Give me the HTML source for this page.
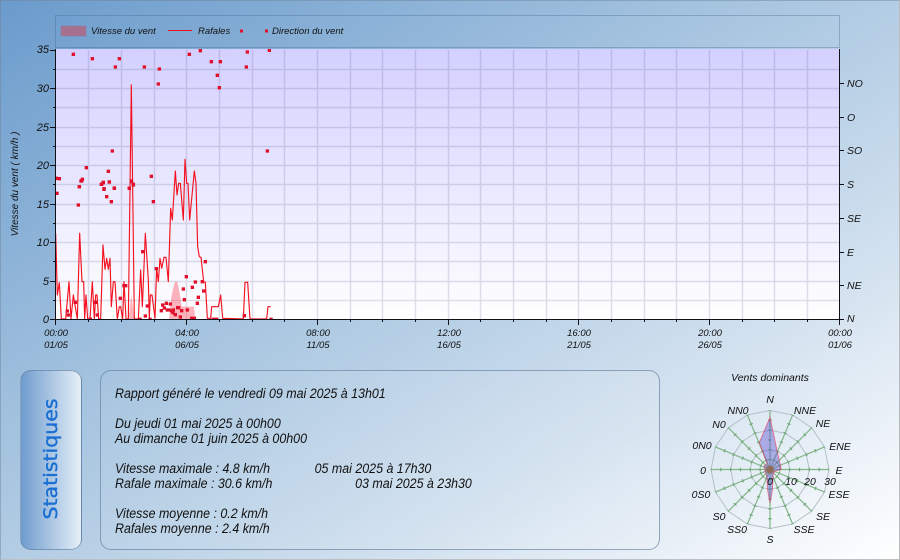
<!DOCTYPE html>
<html><head><meta charset="utf-8"><style>
html,body{margin:0;padding:0;width:900px;height:560px;overflow:hidden}
body{position:relative;font-family:"Liberation Sans",Arial,sans-serif;font-style:italic;color:#111;background:linear-gradient(148deg,#6b9bcc 0%,#a7c5e0 42%,#d2e1ef 72%,#ffffff 100%)}
#frame{position:absolute;left:0;top:0;width:898px;height:558px;border:1px solid rgba(110,130,150,.45);border-right-color:#b8bcc0;border-bottom-color:#bcc0c4}
#leg{position:absolute;left:55px;top:15px;width:783px;height:31px;border:1px solid rgba(70,100,140,.35)}
#stat{position:absolute;left:20px;top:370px;width:60px;height:178px;border:1px solid rgba(100,130,165,.7);border-radius:11px;background:linear-gradient(90deg,#6f9ccf,#e6eff7)}
#panel{position:absolute;left:100px;top:370px;width:558px;height:178px;border:1px solid rgba(100,125,155,.65);border-radius:11px;background:linear-gradient(135deg,rgba(255,255,255,.03),rgba(255,255,255,.1))}
#txt{position:absolute;left:115px;top:386px;font-size:13.5px;line-height:15px;white-space:pre;transform:scaleX(.92);transform-origin:0 0}
svg{position:absolute;left:0;top:0}
text{font-family:"Liberation Sans",Arial,sans-serif;font-style:italic;fill:#111}
</style></head><body>
<div id="frame"></div><div id="leg"></div><div id="stat"></div><div id="panel"></div>
<div id="txt">Rapport généré le vendredi 09 mai 2025 à 13h01

Du jeudi 01 mai 2025 à 00h00
Au dimanche 01 juin 2025 à 00h00

Vitesse maximale : 4.8 km/h<span style="position:absolute;left:217px">05 mai 2025 à 17h30</span>
Rafale maximale : 30.6 km/h<span style="position:absolute;left:261px">03 mai 2025 à 23h30</span>

Vitesse moyenne : 0.2 km/h
Rafales moyenne : 2.4 km/h</div>
<svg width="900" height="560" viewBox="0 0 900 560">
<defs><linearGradient id="pg" x1="0" y1="0" x2="0" y2="1"><stop offset="0" stop-color="#d3d0ff"/><stop offset="1" stop-color="#ffffff"/></linearGradient>
<clipPath id="pc"><rect x="55" y="49" width="785" height="271"/></clipPath></defs>
<rect x="56" y="49" width="784" height="270" fill="url(#pg)"/>
<path fill="none" stroke="#3c3c70" stroke-opacity=".16" stroke-width="1.5" d="M88.5 50V319M121.5 50V319M154.5 50V319M186.5 50V319M219.5 50V319M252.5 50V319M284.5 50V319M317.5 50V319M350.5 50V319M382.5 50V319M415.5 50V319M448.5 50V319M480.5 50V319M513.5 50V319M546.5 50V319M578.5 50V319M611.5 50V319M644.5 50V319M676.5 50V319M709.5 50V319M742.5 50V319M774.5 50V319M807.5 50V319M56 69.5H839M56 88.5H839M56 107.5H839M56 127.5H839M56 146.5H839M56 165.5H839M56 184.5H839M56 204.5H839M56 223.5H839M56 242.5H839M56 261.5H839M56 281.5H839M56 300.5H839"/>
<g clip-path="url(#pc)"><g transform="translate(0,180) scale(.33333)">
<path fill="#ff3c50" fill-opacity=".38" d="M385 417L394 345L403 417ZM507 417L515 345L525 305L532 305L540 345L545 380L582 380L586 417Z"/>
<path fill="none" stroke="#f4101e" stroke-width="3.4" stroke-linejoin="round" d="M167 160L172 345L178 308L184 417L197 417L207 305L213 417L220 345L232 417L239 160L246 305L251 305L254 417L258 345L263 417L270 417L277 305L283 417L287 345L291 345L296 417L302 417L309 195L315 268L320 235L325 268L330 235L334 380L340 305L345 305L352 417L358 380L362 380L368 417L372 305L378 417L385 417L394 -285L403 417L415 417L422 270L427 380L436 160L445 300L448 415L451 345L456 345L465 415L470 265L475 305L480 235L485 265L492 232L498 232L505 305L512 85L517 120L526 -27L531 45L536 10L541 10L550 120L555 -62L560 10L564 10L569 120L583 -27L588 10L593 200L598 230L603 232L611 305L616 307L622 415L632 415L635 380L655 380L662 345L668 415L730 417L735 307L743 307L750 417L800 417L804 380L812 380"/>
<path fill="none" stroke="#e0102c" stroke-width="10" stroke-linecap="square" d="M171 40h.1M235 75h.1M238 20h.1M245 3h.1M305 13h.1M310 8h.1M312 28h.1M320 50h.1M328 6h.1M334 65h.1M343 25h.1M388 25h.1M394 3h.1M400 15h.1M460 65h.1M428 215h.1M616 245h.1M469 266h.1M559 290h.1M586 306h.1M607 305h.1M550 327h.1M577 322h.1M611 333h.1M372 317h.1M377 317h.1M361 355h.1M595 352h.1M553 359h.1M592 370h.1M202 393h.1M205 405h.1M226 367h.1M287 367h.1M292 405h.1M271 418h.1M442 378h.1M436 408h.1M420 418h.1M450 418h.1M484 392h.1M488 375h.1M493 384h.1M499 370h.1M511 372h.1M502 390h.1M507 390h.1M515 393h.1M520 390h.1M519 398h.1M526 404h.1M533 383h.1M536 383h.1M545 392h.1M541 411h.1M562 390h.1M575 415h.1M583 415h.1M640 418h.1M650 418h.1M733 407h.1M813 418h.1"/>
</g>
<path transform="scale(.33333)" fill="none" stroke="#e0102c" stroke-width="10" stroke-linecap="square" d="M220 163h.1M277 176h.1M346 201h.1M358 176h.1M433 201h.1M478 207h.1M475 252h.1M568 163h.1M601 152h.1M634 185h.1M661 185h.1M652 226h.1M658 263h.1M739 201h.1M742 156h.1M808 151h.1M802 453h.1M337 453h.1M259 503h.1M247 538h.1M243 543h.1M238 560h.1M170 535h.1M178 536h.1M325 514h.1M310 547h.1M304 553h.1M328 546h.1M312 566h.1M343 564h.1M388 565h.1M394 545h.1M400 553h.1M454 529h.1"/></g>
<path fill="none" stroke="#101018" stroke-width="1" d="M55.5 49V320M839.5 49V320M55 319.5H840M50 50.5H55M50 88.5H55M50 127.5H55M50 165.5H55M50 204.5H55M50 242.5H55M50 281.5H55M50 319.5H55M53 69.5H55M53 107.5H55M53 146.5H55M53 184.5H55M53 223.5H55M53 261.5H55M53 300.5H55M840 83.5H844M840 117.5H844M840 150.5H844M840 184.5H844M840 218.5H844M840 252.5H844M840 285.5H844M840 319.5H844M55.5 319V325M88.5 319V322M121.5 319V322M154.5 319V322M186.5 319V325M219.5 319V322M252.5 319V322M284.5 319V322M317.5 319V325M350.5 319V322M382.5 319V322M415.5 319V322M448.5 319V325M480.5 319V322M513.5 319V322M546.5 319V322M578.5 319V325M611.5 319V322M644.5 319V322M676.5 319V322M709.5 319V325M742.5 319V322M774.5 319V322M807.5 319V322M839.5 319V325"/>
<g font-size="11" text-anchor="end"><text x="49" y="53">35</text><text x="49" y="92">30</text><text x="49" y="131">25</text><text x="49" y="169">20</text><text x="49" y="208">15</text><text x="49" y="246">10</text><text x="49" y="285">5</text><text x="49" y="323">0</text></g>
<g font-size="10.5"><text x="847" y="87">NO</text><text x="847" y="121">O</text><text x="847" y="154">SO</text><text x="847" y="188">S</text><text x="847" y="222">SE</text><text x="847" y="256">E</text><text x="847" y="289">NE</text><text x="847" y="322">N</text></g>
<g font-size="9.5" text-anchor="middle"><text x="56" y="336">00:00</text><text x="56" y="348">01/05</text><text x="187" y="336">04:00</text><text x="187" y="348">06/05</text><text x="318" y="336">08:00</text><text x="318" y="348">11/05</text><text x="449" y="336">12:00</text><text x="449" y="348">16/05</text><text x="579" y="336">16:00</text><text x="579" y="348">21/05</text><text x="710" y="336">20:00</text><text x="710" y="348">26/05</text><text x="840" y="336">00:00</text><text x="840" y="348">01/06</text></g>
<text font-size="10" text-anchor="middle" transform="translate(18,184) rotate(-90)">Vitesse du vent  ( km/h )</text>
<rect x="61" y="26" width="25" height="10" fill="#a8708f" stroke="#8c7d9e" stroke-width=".7"/>
<path d="M168 30.5H192" stroke="#e8101e" stroke-width="1" fill="none"/>
<rect x="240" y="29.5" width="3" height="3" fill="#e0102c"/><rect x="265" y="29.5" width="3" height="3" fill="#e0102c"/>
<g font-size="9.5"><text x="91" y="34">Vitesse du vent</text><text x="198" y="34">Rafales</text><text x="272" y="34">Direction du vent</text></g>
<text x="0" y="0" transform="translate(57,519.5) rotate(-90)" font-size="19" textLength="121" lengthAdjust="spacingAndGlyphs" stroke="#1a70d2" stroke-width=".4" style="font-family:'DejaVu Sans',sans-serif;font-style:normal;fill:#1a70d2">Statistiques</text>
<text x="770" y="381" font-size="10.5" text-anchor="middle">Vents dominants</text>
<g transform="translate(770,469.5)" fill="none">
<g stroke="#b4c0c8" stroke-width="1"><polygon points="0,-59 22.6,-54.5 41.7,-41.7 54.5,-22.6 59,0 54.5,22.6 41.7,41.7 22.6,54.5 0,59 -22.6,54.5 -41.7,41.7 -54.5,22.6 -59,0 -54.5,-22.6 -41.7,-41.7 -22.6,-54.5"/>
<polygon points="0,-39.3 15,-36.3 27.8,-27.8 36.3,-15 39.3,0 36.3,15 27.8,27.8 15,36.3 0,39.3 -15,36.3 -27.8,27.8 -36.3,15 -39.3,0 -36.3,-15 -27.8,-27.8 -15,-36.3"/>
<polygon points="0,-19.7 7.5,-18.2 13.9,-13.9 18.2,-7.5 19.7,0 18.2,7.5 13.9,13.9 7.5,18.2 0,19.7 -7.5,18.2 -13.9,13.9 -18.2,7.5 -19.7,0 -18.2,-7.5 -13.9,-13.9 -7.5,-18.2"/></g>
<path stroke="#82b488" stroke-width="1.2" d="M0 0L0 -59M0 0L22.6 -54.5M0 0L41.7 -41.7M0 0L54.5 -22.6M0 0L59 0M0 0L54.5 22.6M0 0L41.7 41.7M0 0L22.6 54.5M0 0L0 59M0 0L-22.6 54.5M0 0L-41.7 41.7M0 0L-54.5 22.6M0 0L-59 0M0 0L-54.5 -22.6M0 0L-41.7 -41.7M0 0L-22.6 -54.5"/>
<path stroke="#6fa878" stroke-width="3.4" stroke-dasharray="1.2 8.63" stroke-dashoffset="-9.3" d="M0 0L0 -59M0 0L22.6 -54.5M0 0L41.7 -41.7M0 0L54.5 -22.6M0 0L59 0M0 0L54.5 22.6M0 0L41.7 41.7M0 0L22.6 54.5M0 0L0 59M0 0L-22.6 54.5M0 0L-41.7 41.7M0 0L-54.5 22.6M0 0L-59 0M0 0L-54.5 -22.6M0 0L-41.7 -41.7M0 0L-22.6 -54.5"/>
<polygon points="0,-52 7.7,-16 9.5,-8 10.7,-4 11,0 5,1.5 3,5 2.5,20 0,33.5 -2.5,20 -3,9 -4,4 -5,2 -5,0 -6,-3 -3,-6 -10.7,-27" fill="#5a50d0" fill-opacity=".42" stroke="#e83c5c" stroke-opacity=".6" stroke-width="1"/>
<circle r="4" fill="#a0603c" fill-opacity=".7"/>
</g>
<g font-size="10.5" text-anchor="middle"><text x="770" y="403">N</text><text x="805" y="414">NNE</text><text x="823" y="427">NE</text><text x="840" y="450">ENE</text><text x="839" y="474">E</text><text x="839" y="498">ESE</text><text x="823" y="520">SE</text><text x="804" y="533">SSE</text><text x="770" y="543">S</text><text x="737" y="533">SS0</text><text x="719" y="520">S0</text><text x="701" y="498">0S0</text><text x="703" y="474">0</text><text x="702" y="449">0N0</text><text x="719" y="428">N0</text><text x="738" y="414">NN0</text><text x="770" y="485">0</text><text x="791" y="485">10</text><text x="810" y="485">20</text><text x="830" y="485">30</text></g>
</svg>
</body></html>
